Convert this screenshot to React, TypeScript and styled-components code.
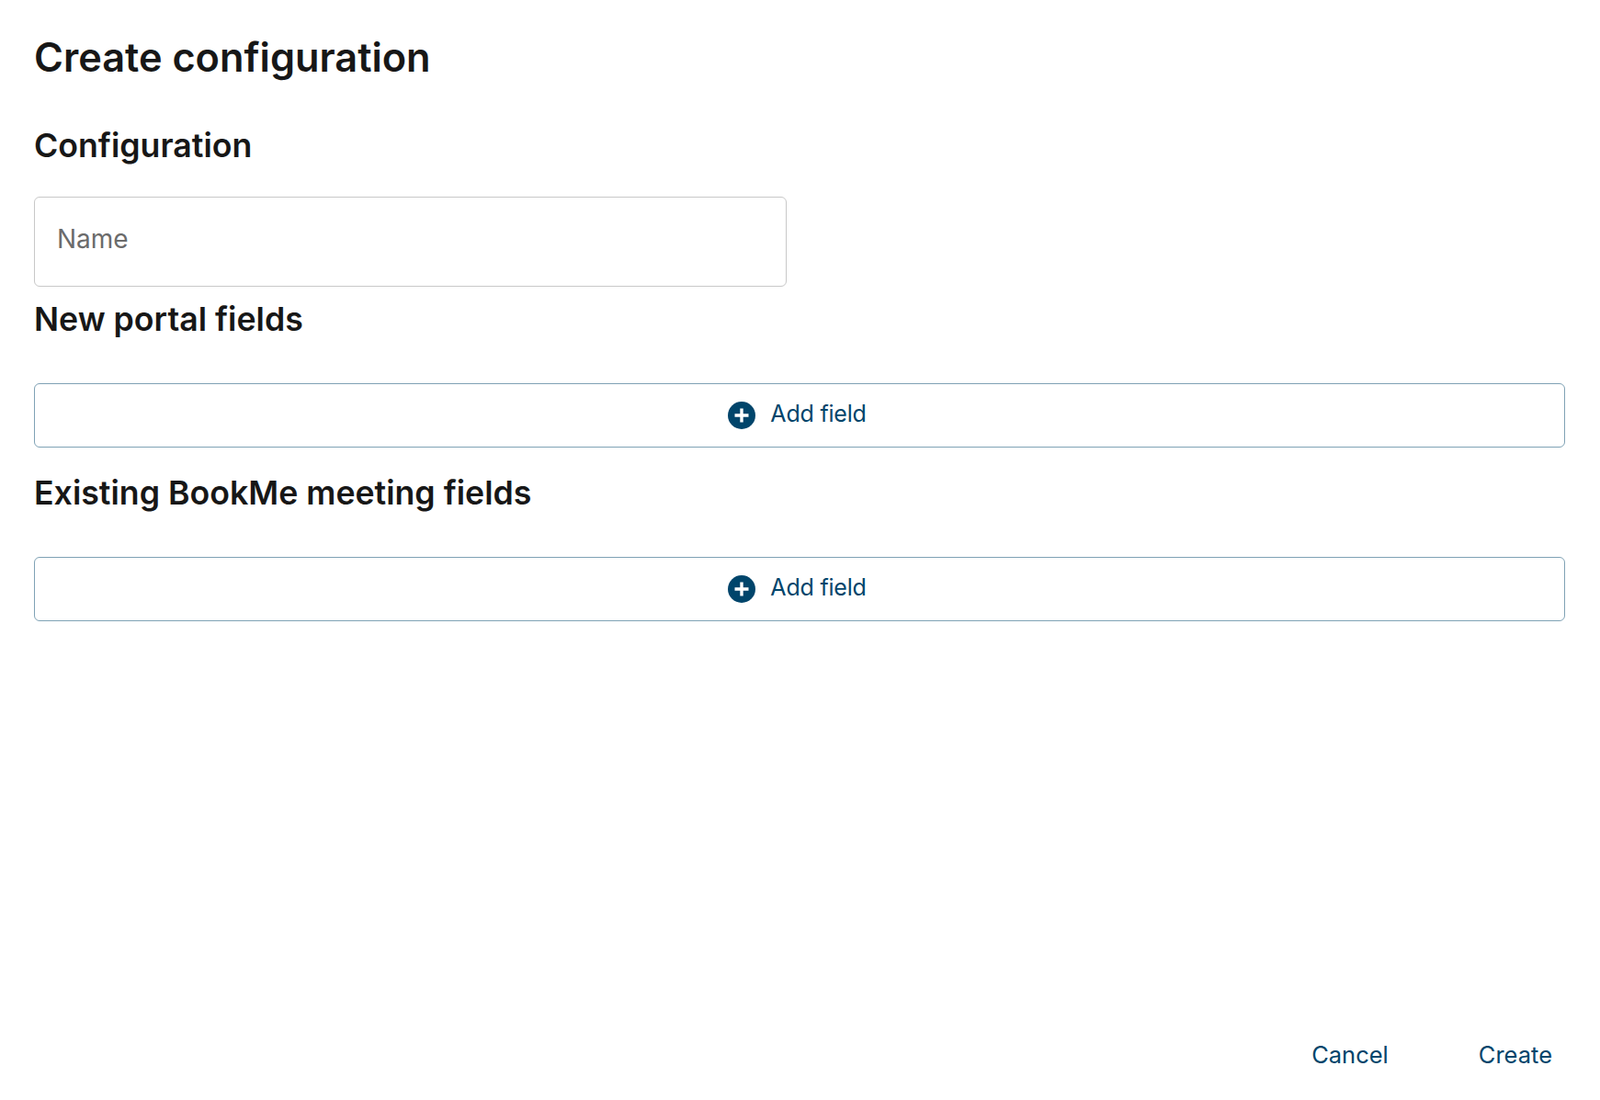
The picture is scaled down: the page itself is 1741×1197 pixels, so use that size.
import React, { FunctionComponent } from 'react';
import styled, { createGlobalStyle } from 'styled-components';

const Colors = {
  INK: '#171717',
  BRAND: '#00456b',
  BRAND_BORDER: '#7fa2b5',
  INPUT_BORDER: '#c8c8c8',
  PLACEHOLDER: '#6b6b6b',
  WHITE: '#ffffff',
};

const GlobalStyle = createGlobalStyle`
  html, body {
    margin: 0;
    padding: 0;
    background: ${Colors.WHITE};
    font-family: Inter, 'Liberation Sans', sans-serif;
  }
`;

const Page = styled.div`
  box-sizing: border-box;
  height: 1197px;
  display: flex;
  flex-direction: column;
  padding: 37px 38px 0 37px;
`;

const Title = styled.h1`
  margin: 0;
  height: 52px;
  font-size: 43.3px;
  line-height: 50px;
  font-weight: 600;
  color: ${Colors.INK};
`;

const SectionTitle = styled.h2<{ $gap: number }>`
  margin: 0 0 ${(p) => p.$gap}px;
  height: 42px;
  font-size: 35.7px;
  line-height: 40px;
  font-weight: 600;
  color: ${Colors.INK};
`;

const FirstSection = styled.section`
  margin-top: 49px;
`;

const NameInput = styled.input`
  box-sizing: border-box;
  display: block;
  width: 819px;
  height: 98px;
  padding: 0 24px 6px;
  border: 1px solid ${Colors.INPUT_BORDER};
  border-radius: 6px;
  background: ${Colors.WHITE};
  font-family: inherit;
  font-size: 28px;
  outline: none;

  &::placeholder {
    color: ${Colors.PLACEHOLDER};
    opacity: 1;
  }
`;

const FieldSection = styled.section`
  margin-top: 15px;
`;

const AddFieldButton = styled.button`
  box-sizing: border-box;
  width: 100%;
  height: 70px;
  margin-bottom: 14px;
  padding: 0 5px 0 0;
  display: flex;
  align-items: center;
  justify-content: center;
  gap: 16px;
  border: 1px solid ${Colors.BRAND_BORDER};
  border-radius: 6px;
  background: ${Colors.WHITE};
  color: ${Colors.BRAND};
  font-family: inherit;
  font-size: 25px;
  letter-spacing: -0.2px;
  cursor: pointer;
`;

const ButtonLabel = styled.span`
  position: relative;
  top: -2px;
`;

const Footer = styled.footer`
  margin-top: auto;
  height: 65px;
  display: flex;
  justify-content: flex-end;
  gap: 98px;
  padding-right: 14px;
`;

const FooterButton = styled.button`
  height: 32px;
  padding: 0;
  border: 0;
  background: none;
  color: ${Colors.BRAND};
  font-family: inherit;
  font-size: 25.5px;
  line-height: 32px;
  cursor: pointer;
`;

const PlusCircle: FunctionComponent = () => (
  <svg width="30" height="30" viewBox="0 0 30 30" aria-hidden="true">
    <circle cx="15" cy="15" r="15" fill={Colors.BRAND} />
    <path d="M15 7.5v15M7.5 15h15" stroke={Colors.WHITE} strokeWidth="3.4" fill="none" />
  </svg>
);

const AddField: FunctionComponent = () => (
  <AddFieldButton type="button">
    <PlusCircle />
    <ButtonLabel>Add field</ButtonLabel>
  </AddFieldButton>
);

const App: FunctionComponent = () => (
  <Page>
    <GlobalStyle />
    <Title>Create configuration</Title>
    <FirstSection>
      <SectionTitle $gap={34}>Configuration</SectionTitle>
      <NameInput placeholder="Name" />
    </FirstSection>
    <FieldSection>
      <SectionTitle $gap={48}>New portal fields</SectionTitle>
      <AddField />
    </FieldSection>
    <FieldSection>
      <SectionTitle $gap={48}>Existing BookMe meeting fields</SectionTitle>
      <AddField />
    </FieldSection>
    <Footer>
      <FooterButton type="button">Cancel</FooterButton>
      <FooterButton type="button">Create</FooterButton>
    </Footer>
  </Page>
);

export default App;
